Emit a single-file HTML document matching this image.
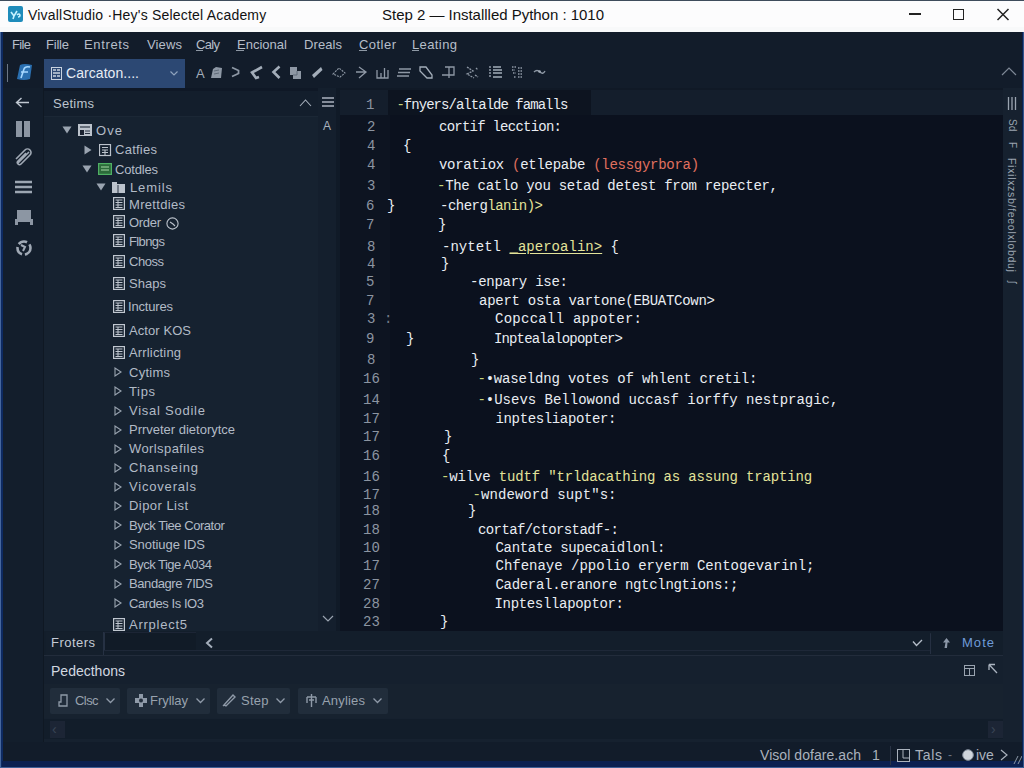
<!DOCTYPE html>
<html><head><meta charset="utf-8">
<style>
*{margin:0;padding:0;box-sizing:border-box}
html,body{width:1024px;height:768px;overflow:hidden;background:#121c2a}
.a{position:absolute;white-space:pre}
.s{font-family:"Liberation Sans",sans-serif}
.m{font-family:"Liberation Mono",monospace}
</style></head><body>
<div class="a" style="left:0px;top:0px;width:1024px;height:32px;background:#fcfcfd;"></div>
<div class="a" style="left:0px;top:27px;width:1024px;height:5px;background:#f8f9fa;"></div>
<div class="a" style="left:0px;top:0px;width:1024px;height:1px;background:#3e4c5c;"></div>
<div class="a" style="left:2px;top:32px;width:1022px;height:25px;background:#121c2a;"></div>
<div class="a" style="left:2px;top:57px;width:1022px;height:31px;background:#121c2a;"></div>
<div class="a" style="left:2px;top:88px;width:41px;height:654px;background:#131e2c;"></div>
<div class="a" style="left:43px;top:88px;width:1px;height:654px;background:#0f1823;"></div>
<div class="a" style="left:44px;top:88px;width:274px;height:543px;background:#162230;"></div>
<div class="a" style="left:44px;top:88px;width:296px;height:3px;background:#0f1826;"></div>
<div class="a" style="left:44px;top:91px;width:274px;height:26px;background:#131e2c;"></div>
<div class="a" style="left:44px;top:116px;width:274px;height:1px;background:#1b2735;"></div>
<div class="a" style="left:318px;top:88px;width:22px;height:543px;background:#141f2d;"></div>
<div class="a" style="left:336px;top:88px;width:4px;height:543px;background:#101a27;"></div>
<div class="a" style="left:340px;top:88px;width:663px;height:543px;background:#0b111e;"></div>
<div class="a" style="left:340px;top:88px;width:663px;height:2px;background:#101926;"></div>
<div class="a" style="left:340px;top:90px;width:48px;height:25px;background:#141e2c;"></div>
<div class="a" style="left:388px;top:90px;width:203px;height:25px;background:#0d1420;"></div>
<div class="a" style="left:591px;top:90px;width:412px;height:25px;background:#141e2c;"></div>
<div class="a" style="left:340px;top:115px;width:50px;height:516px;background:#0d1421;"></div>
<div class="a" style="left:1003px;top:88px;width:21px;height:654px;background:#16212f;"></div>
<div class="a" style="left:44px;top:631px;width:959px;height:111px;background:#16212f;"></div>
<div class="a" style="left:44px;top:631px;width:959px;height:24px;background:#131e2b;"></div>
<div class="a" style="left:46px;top:632px;width:57px;height:23px;background:#141f2c;"></div>
<div class="a" style="left:103px;top:632px;width:1px;height:23px;background:#263143;"></div>
<div class="a" style="left:104px;top:632px;width:92px;height:18px;background:#111b27;border-left:1px solid #263143;border-top:1px solid #1c2535"></div>
<div class="a" style="left:104px;top:650px;width:826px;height:1px;background:#1e2838;"></div>
<div class="a" style="left:930px;top:633px;width:1px;height:21px;background:#222c3b;"></div>
<div class="a" style="left:44px;top:655px;width:959px;height:1px;background:#222c3b;"></div>
<div class="a" style="left:44px;top:656px;width:959px;height:28px;background:#15202e;"></div>
<div class="a" style="left:44px;top:684px;width:959px;height:34px;background:#17222f;"></div>
<div class="a" style="left:44px;top:719px;width:959px;height:20px;background:#121d2a;"></div>
<div class="a" style="left:2px;top:742px;width:1022px;height:24px;background:#121c2a;"></div>
<div class="a" style="left:0px;top:32px;width:1px;height:736px;background:#46669c;"></div>
<div class="a" style="left:1px;top:32px;width:2px;height:736px;background:#0d2a62;"></div>
<div class="a" style="left:2px;top:761px;width:1022px;height:6px;background:#0c2050;"></div>
<div class="a" style="left:0px;top:767px;width:1024px;height:1px;background:#3f5f95;"></div>
<div class="a" style="left:1022px;top:32px;width:1px;height:735px;background:#0a2050;"></div>
<div class="a" style="left:1023px;top:32px;width:1px;height:736px;background:#33558a;"></div>
<div class="a" style="left:44px;top:59px;width:141px;height:29px;background:#2c4873;"></div>
<div class="a" style="left:50px;top:688px;width:70px;height:26px;background:#212d3b;border-radius:2px"></div>
<div class="a" style="left:127px;top:688px;width:83px;height:26px;background:#212d3b;border-radius:2px"></div>
<div class="a" style="left:217px;top:688px;width:73px;height:26px;background:#212d3b;border-radius:2px"></div>
<div class="a" style="left:298px;top:688px;width:90px;height:26px;background:#212d3b;border-radius:2px"></div>
<div class="a" style="left:50px;top:721px;width:15px;height:17px;background:#1c2535;"></div>
<div class="a" style="left:988px;top:721px;width:15px;height:17px;background:#1c2535;"></div>
<div class="a" style="left:8px;top:6px;width:15px;height:16px;background:#1f8cbb;border-radius:2px"></div>
<div class="a" style="left:909px;top:13px;width:12px;height:2px;background:#222;"></div>
<div class="a" style="left:953px;top:9px;width:11px;height:11px;background:transparent;border:1.6px solid #222"></div>
<div class="a" style="left:196px;top:50px;width:7px;height:1px;background:#8e98a4;"></div>
<div class="a" style="left:236px;top:50px;width:8px;height:1px;background:#8e98a4;"></div>
<div class="a" style="left:359px;top:50px;width:8px;height:1px;background:#8e98a4;"></div>
<div class="a" style="left:412px;top:50px;width:7px;height:1px;background:#8e98a4;"></div>
<div class="a" style="left:930px;top:634px;width:1px;height:20px;background:#263042;"></div>
<div class="a" style="left:890px;top:746px;width:1px;height:19px;background:#2a3446;"></div>
<div class="a" style="left:7px;top:64px;width:1px;height:18px;background:#6b7685;"></div>
<svg class="a" style="left:8px;top:6px;" width="15" height="16" viewBox="0 0 15 16"><path d="M3 6L6 10L9 5M6 10L5 13M9 9Q11 7 12 9Q12 11 10 11" fill="none" stroke="#c8f2ff" stroke-width="1.6"/></svg>
<svg class="a" style="left:996px;top:8px;" width="14" height="13" viewBox="0 0 14 13"><path d="M1.5 1L12.5 12M12.5 1L1.5 12" stroke="#222" stroke-width="1.5"/></svg>
<svg class="a" style="left:51px;top:67px;" width="11" height="13" viewBox="0 0 11 13"><rect x="0.5" y="0.5" width="10" height="12" fill="none" stroke="#c9d3e0"/><path d="M2 3H5M6 3H9M2 6H9M2 9H5M6 9H9" stroke="#c9d3e0" stroke-width="1.4"/></svg>
<svg class="a" style="left:170px;top:71px;" width="8" height="5" viewBox="0 0 8 5"><path d="M0.5 0.5L4 4L7.5 0.5" fill="none" stroke="#8fa3bd" stroke-width="1.2"/></svg>
<svg class="a" style="left:62px;top:126px;" width="10" height="8" viewBox="0 0 10 8"><path d="M0.5 0.5H9.5L5 7.5Z" fill="#9aa4b0"/></svg>
<svg class="a" style="left:84px;top:144.5px;" width="8" height="10" viewBox="0 0 8 10"><path d="M0.5 0.5V9.5L7.5 5Z" fill="#9aa4b0"/></svg>
<svg class="a" style="left:82px;top:165px;" width="10" height="8" viewBox="0 0 10 8"><path d="M0.5 0.5H9.5L5 7.5Z" fill="#9aa4b0"/></svg>
<svg class="a" style="left:96px;top:183px;" width="10" height="8" viewBox="0 0 10 8"><path d="M0.5 0.5H9.5L5 7.5Z" fill="#9aa4b0"/></svg>
<svg class="a" style="left:114px;top:367px;" width="8" height="10" viewBox="0 0 8 10"><path d="M1 1V9L7 5Z" fill="none" stroke="#9aa4b0" stroke-width="1.1"/></svg>
<svg class="a" style="left:114px;top:386px;" width="8" height="10" viewBox="0 0 8 10"><path d="M1 1V9L7 5Z" fill="none" stroke="#9aa4b0" stroke-width="1.1"/></svg>
<svg class="a" style="left:114px;top:405.5px;" width="8" height="10" viewBox="0 0 8 10"><path d="M1 1V9L7 5Z" fill="none" stroke="#9aa4b0" stroke-width="1.1"/></svg>
<svg class="a" style="left:114px;top:424.5px;" width="8" height="10" viewBox="0 0 8 10"><path d="M1 1V9L7 5Z" fill="none" stroke="#9aa4b0" stroke-width="1.1"/></svg>
<svg class="a" style="left:114px;top:443.5px;" width="8" height="10" viewBox="0 0 8 10"><path d="M1 1V9L7 5Z" fill="none" stroke="#9aa4b0" stroke-width="1.1"/></svg>
<svg class="a" style="left:114px;top:462.5px;" width="8" height="10" viewBox="0 0 8 10"><path d="M1 1V9L7 5Z" fill="none" stroke="#9aa4b0" stroke-width="1.1"/></svg>
<svg class="a" style="left:114px;top:481.5px;" width="8" height="10" viewBox="0 0 8 10"><path d="M1 1V9L7 5Z" fill="none" stroke="#9aa4b0" stroke-width="1.1"/></svg>
<svg class="a" style="left:114px;top:500.5px;" width="8" height="10" viewBox="0 0 8 10"><path d="M1 1V9L7 5Z" fill="none" stroke="#9aa4b0" stroke-width="1.1"/></svg>
<svg class="a" style="left:114px;top:520px;" width="8" height="10" viewBox="0 0 8 10"><path d="M1 1V9L7 5Z" fill="none" stroke="#9aa4b0" stroke-width="1.1"/></svg>
<svg class="a" style="left:114px;top:539.5px;" width="8" height="10" viewBox="0 0 8 10"><path d="M1 1V9L7 5Z" fill="none" stroke="#9aa4b0" stroke-width="1.1"/></svg>
<svg class="a" style="left:114px;top:559px;" width="8" height="10" viewBox="0 0 8 10"><path d="M1 1V9L7 5Z" fill="none" stroke="#9aa4b0" stroke-width="1.1"/></svg>
<svg class="a" style="left:114px;top:578.5px;" width="8" height="10" viewBox="0 0 8 10"><path d="M1 1V9L7 5Z" fill="none" stroke="#9aa4b0" stroke-width="1.1"/></svg>
<svg class="a" style="left:114px;top:598px;" width="8" height="10" viewBox="0 0 8 10"><path d="M1 1V9L7 5Z" fill="none" stroke="#9aa4b0" stroke-width="1.1"/></svg>
<svg class="a" style="left:77px;top:124px;" width="15" height="13" viewBox="0 0 15 13"><rect x="1" y="0" width="14" height="12" fill="#bcc3cc"/><path d="M3 3H13" stroke="#2a3444" stroke-width="1.2"/><rect x="3" y="6" width="4" height="5" fill="#1a2230"/><path d="M8 7H13M8 9.5H13" stroke="#2a3444" stroke-width="1"/></svg>
<svg class="a" style="left:99px;top:144px;" width="13" height="13" viewBox="0 0 13 13"><rect x="0.5" y="0.5" width="11" height="11" fill="none" stroke="#bcc3cc" stroke-width="1.2"/><path d="M3 3.5H9M3 6H9M3 8.5H9M6 6V11" stroke="#bcc3cc" stroke-width="1.1"/></svg>
<svg class="a" style="left:98px;top:163px;" width="14" height="12" viewBox="0 0 14 12"><rect x="0.6" y="0.6" width="12.8" height="10.8" fill="#2c6a3a" stroke="#4fb064" stroke-width="1.2"/><path d="M3 4H11M3 7H11" stroke="#a8d8a8" stroke-width="1.1"/></svg>
<svg class="a" style="left:112px;top:181px;" width="14" height="13" viewBox="0 0 14 13"><path d="M0 1H5V3H13V12H0Z" fill="#bcc3cc"/><path d="M6 4V12" stroke="#2a3444" stroke-width="1"/></svg>
<svg class="a" style="left:113px;top:197px;" width="12" height="13" viewBox="0 0 12 13"><rect x="0.6" y="0.6" width="10.8" height="11.8" fill="none" stroke="#c0c7d0" stroke-width="1.2"/><path d="M2.5 3H9.5M2.5 5.5H9.5M2.5 8H9.5M2.5 10.5H9.5M5 3V11" stroke="#c0c7d0" stroke-width="1"/></svg>
<svg class="a" style="left:113px;top:215px;" width="12" height="13" viewBox="0 0 12 13"><rect x="0.6" y="0.6" width="10.8" height="11.8" fill="none" stroke="#c0c7d0" stroke-width="1.2"/><path d="M2.5 3H9.5M2.5 5.5H9.5M2.5 8H9.5M2.5 10.5H9.5M5 3V11" stroke="#c0c7d0" stroke-width="1"/></svg>
<svg class="a" style="left:113px;top:234px;" width="12" height="13" viewBox="0 0 12 13"><rect x="0.6" y="0.6" width="10.8" height="11.8" fill="none" stroke="#c0c7d0" stroke-width="1.2"/><path d="M2.5 3H9.5M2.5 5.5H9.5M2.5 8H9.5M2.5 10.5H9.5M5 3V11" stroke="#c0c7d0" stroke-width="1"/></svg>
<svg class="a" style="left:113px;top:255px;" width="12" height="13" viewBox="0 0 12 13"><rect x="0.6" y="0.6" width="10.8" height="11.8" fill="none" stroke="#c0c7d0" stroke-width="1.2"/><path d="M2.5 3H9.5M2.5 5.5H9.5M2.5 8H9.5M2.5 10.5H9.5M5 3V11" stroke="#c0c7d0" stroke-width="1"/></svg>
<svg class="a" style="left:113px;top:277px;" width="12" height="13" viewBox="0 0 12 13"><rect x="0.6" y="0.6" width="10.8" height="11.8" fill="none" stroke="#c0c7d0" stroke-width="1.2"/><path d="M2.5 3H9.5M2.5 5.5H9.5M2.5 8H9.5M2.5 10.5H9.5M5 3V11" stroke="#c0c7d0" stroke-width="1"/></svg>
<svg class="a" style="left:113px;top:300px;" width="12" height="13" viewBox="0 0 12 13"><rect x="0.6" y="0.6" width="10.8" height="11.8" fill="none" stroke="#c0c7d0" stroke-width="1.2"/><path d="M2.5 3H9.5M2.5 5.5H9.5M2.5 8H9.5M2.5 10.5H9.5M5 3V11" stroke="#c0c7d0" stroke-width="1"/></svg>
<svg class="a" style="left:113px;top:324px;" width="12" height="13" viewBox="0 0 12 13"><rect x="0.6" y="0.6" width="10.8" height="11.8" fill="none" stroke="#c0c7d0" stroke-width="1.2"/><path d="M2.5 3H9.5M2.5 5.5H9.5M2.5 8H9.5M2.5 10.5H9.5M5 3V11" stroke="#c0c7d0" stroke-width="1"/></svg>
<svg class="a" style="left:113px;top:346px;" width="12" height="13" viewBox="0 0 12 13"><rect x="0.6" y="0.6" width="10.8" height="11.8" fill="none" stroke="#c0c7d0" stroke-width="1.2"/><path d="M2.5 3H9.5M2.5 5.5H9.5M2.5 8H9.5M2.5 10.5H9.5M5 3V11" stroke="#c0c7d0" stroke-width="1"/></svg>
<svg class="a" style="left:113px;top:618px;" width="12" height="13" viewBox="0 0 12 13"><rect x="0.6" y="0.6" width="10.8" height="11.8" fill="none" stroke="#c0c7d0" stroke-width="1.2"/><path d="M2.5 3H9.5M2.5 5.5H9.5M2.5 8H9.5M2.5 10.5H9.5M5 3V11" stroke="#c0c7d0" stroke-width="1"/></svg>
<svg class="a" style="left:166px;top:217px;" width="13" height="13" viewBox="0 0 13 13"><circle cx="6.5" cy="6.5" r="5.6" fill="none" stroke="#bcc3cc" stroke-width="1.1"/><path d="M4 5L7 7L9 9" stroke="#bcc3cc" fill="none" stroke-width="1.1"/></svg>
<svg class="a" style="left:299px;top:98px;" width="13" height="9" viewBox="0 0 13 9"><path d="M1 8L6.5 2L12 8" fill="none" stroke="#a7b0bc" stroke-width="1.1"/></svg>
<svg class="a" style="left:322px;top:97px;" width="12" height="10" viewBox="0 0 12 10"><path d="M0 1H12M0 5H12M0 9H12" stroke="#aab3bf" stroke-width="1.6"/></svg>
<svg class="a" style="left:322px;top:615px;" width="12" height="8" viewBox="0 0 12 8"><path d="M1 1L6 6L11 1" fill="none" stroke="#9aa4b0" stroke-width="1.2"/></svg>
<svg class="a" style="left:204px;top:637px;" width="10" height="12" viewBox="0 0 10 12"><path d="M8 1.5L3 6L8 10.5" fill="none" stroke="#a4aebb" stroke-width="2"/></svg>
<svg class="a" style="left:105.5px;top:698px;" width="9" height="6" viewBox="0 0 9 6"><path d="M0.5 0.5L4.5 4.5L8.5 0.5" fill="none" stroke="#8f9aa8" stroke-width="1.3"/></svg>
<svg class="a" style="left:195.5px;top:698px;" width="9" height="6" viewBox="0 0 9 6"><path d="M0.5 0.5L4.5 4.5L8.5 0.5" fill="none" stroke="#8f9aa8" stroke-width="1.3"/></svg>
<svg class="a" style="left:276px;top:698px;" width="9" height="6" viewBox="0 0 9 6"><path d="M0.5 0.5L4.5 4.5L8.5 0.5" fill="none" stroke="#8f9aa8" stroke-width="1.3"/></svg>
<svg class="a" style="left:372.7px;top:698px;" width="9" height="6" viewBox="0 0 9 6"><path d="M0.5 0.5L4.5 4.5L8.5 0.5" fill="none" stroke="#8f9aa8" stroke-width="1.3"/></svg>
<svg class="a" style="left:58px;top:694px;" width="10" height="13" viewBox="0 0 10 13"><path d="M3 1H9V12H1V8H3Z" fill="none" stroke="#8f9aa8" stroke-width="1.3"/></svg>
<svg class="a" style="left:134px;top:693px;" width="14" height="15" viewBox="0 0 14 15"><path d="M5 1H9V5H13V10H9V14H5V10H1V5H5Z" fill="#8f9aa8"/><circle cx="7" cy="7.5" r="2" fill="#222d3b"/></svg>
<svg class="a" style="left:222px;top:693px;" width="14" height="14" viewBox="0 0 14 14"><path d="M2 12L11 2L13 4L4 13ZM2 12L1 13" fill="none" stroke="#8f9aa8" stroke-width="1.4"/></svg>
<svg class="a" style="left:305px;top:693px;" width="13" height="15" viewBox="0 0 13 15"><path d="M6.5 1V14M2 4H11M2 4V10M11 4V10M4 7H9" fill="none" stroke="#8f9aa8" stroke-width="1.4"/></svg>
<svg class="a" style="left:912px;top:639px;" width="11" height="8" viewBox="0 0 11 8"><path d="M1 2.5L4.5 6.5L10 1" fill="none" stroke="#b4bdc8" stroke-width="1.4"/></svg>
<svg class="a" style="left:942px;top:637px;" width="9" height="12" viewBox="0 0 9 12"><path d="M4.5 1L1 5.5H3.5L2.5 11H5L5.5 5.5H8Z" fill="#8c98a8"/></svg>
<svg class="a" style="left:964px;top:665px;" width="11" height="11" viewBox="0 0 11 11"><rect x="0.5" y="0.5" width="10" height="10" fill="none" stroke="#9aa4b0"/><path d="M0.5 3.5H10.5M5.5 3.5V10.5" stroke="#9aa4b0"/></svg>
<svg class="a" style="left:987px;top:663px;" width="11" height="11" viewBox="0 0 11 11"><path d="M2 1.5H8M2 1.5V7M2 1.5L10 10" fill="none" stroke="#aab3bf" stroke-width="1.3"/></svg>
<svg class="a" style="left:897px;top:749px;" width="13" height="13" viewBox="0 0 13 13"><rect x="0.5" y="0.5" width="12" height="12" fill="none" stroke="#aab2bd"/><path d="M6 1V9H12" stroke="#aab2bd" fill="none"/></svg>
<svg class="a" style="left:962px;top:749px;" width="12" height="12" viewBox="0 0 12 12"><circle cx="6" cy="6" r="5.3" fill="#cfd5dc" stroke="#8892a0"/></svg>
<svg class="a" style="left:1000px;top:749px;" width="8" height="12" viewBox="0 0 8 12"><path d="M1 1L7 6L1 11" fill="none" stroke="#aab2bd" stroke-width="1.2"/></svg>
<svg class="a" style="left:1013px;top:754px;" width="9" height="11" viewBox="0 0 9 11"><path d="M1 10L5 2M5 10L9 2" stroke="#8a96a6" stroke-width="1"/></svg>
<svg class="a" style="left:15px;top:63px;" width="19" height="19" viewBox="0 0 19 19"><path d="M5 2Q9 0 17 2L15 16Q9 18 2 16Z" fill="#2a6fb0"/><path d="M6 15L9 6Q10 3 15 4M6 9H13" stroke="#a7d8ff" stroke-width="1.6" fill="none"/></svg>
<svg class="a" style="left:15px;top:97px;" width="15" height="12" viewBox="0 0 15 12"><path d="M14 5.5H2M6.5 1L1.5 5.5L6.5 10" fill="none" stroke="#c0c8d2" stroke-width="1.4"/></svg>
<svg class="a" style="left:16px;top:121px;" width="15" height="17" viewBox="0 0 15 17"><rect x="0" y="0" width="6" height="16" fill="#8c96a3"/><rect x="8" y="0" width="6" height="16" fill="#8c96a3"/></svg>
<svg class="a" style="left:15px;top:148px;" width="17" height="18" viewBox="0 0 17 18"><path d="M3 15L14 4M1 11L10 2A3 3 0 0 1 15 7L6 16A2 2 0 0 1 3 13L11 5" fill="none" stroke="#a0a9b5" stroke-width="1.6"/></svg>
<svg class="a" style="left:15px;top:180px;" width="18" height="15" viewBox="0 0 18 15"><path d="M0 2H17M0 7H17M0 12H17" stroke="#9ca6b2" stroke-width="2.4"/></svg>
<svg class="a" style="left:15px;top:209px;" width="18" height="18" viewBox="0 0 18 18"><rect x="2" y="1" width="14" height="9" fill="#8c96a3"/><path d="M0 10H18V16H15V13H3V16H0Z" fill="#8c96a3"/></svg>
<svg class="a" style="left:15px;top:239px;" width="18" height="18" viewBox="0 0 18 18"><circle cx="9" cy="9" r="6.5" fill="none" stroke="#a0a9b5" stroke-width="2.6" stroke-dasharray="9 3"/><path d="M6 6L10 8L8 12" fill="none" stroke="#a0a9b5" stroke-width="2"/></svg>
<svg class="a" style="left:0;top:0" width="1024" height="100" viewBox="0 0 1024 100">
<path d="M211 78L213 69L216 67L222 68L221 78Z" fill="#8e98a5"/><path d="M214 71L219 70M214 74L219 73" stroke="#5f6a78" stroke-width="1"/>
<path d="M232 67.5L238.5 70.5L238.5 73.5L232 76.5" fill="none" stroke="#8e98a5" stroke-width="1.8"/>
<path d="M262 67L252 72.5L256 78L259 77" fill="none" stroke="#a3adb9" stroke-width="2.6"/>
<path d="M279.5 66.5L273.5 72L279.5 78" fill="none" stroke="#a3adb9" stroke-width="2.6"/>
<path d="M290 67H297V71H301V79H293V75H290Z" fill="#8e98a5"/><path d="M297 71V75H293" stroke="#5f6a78" fill="none"/>
<path d="M321 67L312 75L314 78L322.5 70Z" fill="#a3adb9"/>
<path d="M333 74L339 68L345 73L340 77Z" fill="none" stroke="#8e98a5" stroke-width="1.1" stroke-dasharray="2 1"/>
<path d="M359 67L366 72L359 78M356 72H365" fill="none" stroke="#8e98a5" stroke-width="1.3"/>
<path d="M377 70V78H388V70M381 73V78M384.5 68V78" fill="none" stroke="#8e98a5" stroke-width="1.3"/>
<path d="M399 69H411M398 72.5H410M397 76H409" fill="none" stroke="#8e98a5" stroke-width="1.5"/>
<path d="M420 67H426L432 75V78H427L420 71Z" fill="none" stroke="#a3adb9" stroke-width="1.3"/>
<path d="M445 67H454V75H442M449 67V78" fill="none" stroke="#8e98a5" stroke-width="1.3"/>
<path d="M467 67L473 71L467 74L474 78M476 68L478 70M475 75L478 77" fill="none" stroke="#8e98a5" stroke-width="1.3" stroke-dasharray="2 1"/>
<path d="M489 67H491M489 70H491M489 73H491M489 76H491" stroke="#8e98a5" stroke-width="1.5"/><path d="M493 67H501M493 70H502M493 73H502M493 77H502" stroke="#a3adb9" stroke-width="1.3"/>
<path d="M512 67H516M512 70H515M513 73H516M514 77H516M518 68H522M518 71H523M518 74H523M518 77H522" stroke="#8e98a5" stroke-width="1.4" stroke-dasharray="1.5 1"/>
<path d="M534 72Q537 69 540 72T545 71" fill="none" stroke="#8e98a5" stroke-width="1.4"/><circle cx="539.5" cy="71.5" r="1.3" fill="#a3adb9"/>
</svg>
<svg class="a" style="left:1001px;top:66px;" width="16" height="10" viewBox="0 0 16 10"><path d="M1 9L8 2L15 9" fill="none" stroke="#7e8896" stroke-width="1.2"/></svg>
<div id="t27d6acfc" class="a s" style="left:28.0px;top:7.8px;font-size:14px;line-height:14px;color:#121212;letter-spacing:0.201px;">VivallStudio ·Hey's Selectel Academy</div>
<div id="t53f66ff9" class="a s" style="left:382.0px;top:7.3px;font-size:15px;line-height:15px;color:#121212;letter-spacing:-0.020px;">Step 2 — Installled Python : 1010</div>
<div id="t04511f86" class="a s" style="left:12.0px;top:37.8px;font-size:13px;line-height:13px;color:#b6bec9;letter-spacing:-0.649px;">File</div>
<div id="td86eb1df" class="a s" style="left:46.0px;top:37.8px;font-size:13px;line-height:13px;color:#b6bec9;letter-spacing:-0.209px;">Fille</div>
<div id="t122e2e0d" class="a s" style="left:84.0px;top:37.8px;font-size:13px;line-height:13px;color:#b6bec9;letter-spacing:0.636px;">Entrets</div>
<div id="t5f6594cd" class="a s" style="left:147.0px;top:37.8px;font-size:13px;line-height:13px;color:#b6bec9;letter-spacing:0.139px;">Views</div>
<div id="t4c7ac76f" class="a s" style="left:196.0px;top:37.8px;font-size:13px;line-height:13px;color:#b6bec9;letter-spacing:-0.669px;">Caly</div>
<div id="t51c220b1" class="a s" style="left:237.0px;top:37.8px;font-size:13px;line-height:13px;color:#b6bec9;letter-spacing:0.019px;">Encional</div>
<div id="t0d2a9516" class="a s" style="left:304.0px;top:37.8px;font-size:13px;line-height:13px;color:#b6bec9;letter-spacing:0.087px;">Dreals</div>
<div id="t6435b731" class="a s" style="left:359.0px;top:37.8px;font-size:13px;line-height:13px;color:#b6bec9;letter-spacing:0.465px;">Cotler</div>
<div id="t408bfb37" class="a s" style="left:412.0px;top:37.8px;font-size:13px;line-height:13px;color:#b6bec9;letter-spacing:0.392px;">Leating</div>
<div id="td29361e1" class="a s" style="left:66.0px;top:66.3px;font-size:14px;line-height:14px;color:#e6ecf4;letter-spacing:0.058px;">Carcaton....</div>
<div id="t201e9aea" class="a s" style="left:196.0px;top:66.8px;font-size:13px;line-height:13px;color:#a3adb9;">A</div>
<div id="t3d59062c" class="a s" style="left:53.0px;top:97.3px;font-size:13px;line-height:13px;color:#bcc4ce;letter-spacing:0.254px;">Setims</div>
<div id="t05089d22" class="a s" style="left:96.0px;top:123.9px;font-size:13px;line-height:13px;color:#b2bbc6;letter-spacing:1.079px;">Ove</div>
<div id="t79654462" class="a s" style="left:115.0px;top:143.4px;font-size:13px;line-height:13px;color:#b2bbc6;letter-spacing:0.257px;">Catfies</div>
<div id="t27a2d8b7" class="a s" style="left:115.0px;top:162.9px;font-size:13px;line-height:13px;color:#b2bbc6;letter-spacing:-0.180px;">Cotdles</div>
<div id="td7e4e8dd" class="a s" style="left:130.0px;top:180.9px;font-size:13px;line-height:13px;color:#b2bbc6;letter-spacing:0.887px;">Lemils</div>
<div id="tc03c9e98" class="a s" style="left:129.0px;top:197.9px;font-size:13px;line-height:13px;color:#b2bbc6;letter-spacing:0.318px;">Mrettdies</div>
<div id="tf359fc4b" class="a s" style="left:129.0px;top:215.9px;font-size:13px;line-height:13px;color:#b2bbc6;letter-spacing:-0.307px;">Order</div>
<div id="t46e83d39" class="a s" style="left:129.0px;top:234.9px;font-size:13px;line-height:13px;color:#b2bbc6;letter-spacing:-0.604px;">Flbngs</div>
<div id="t15f0a4c3" class="a s" style="left:129.0px;top:255.4px;font-size:13px;line-height:13px;color:#b2bbc6;letter-spacing:-0.462px;">Choss</div>
<div id="ta084c07b" class="a s" style="left:129.0px;top:277.4px;font-size:13px;line-height:13px;color:#b2bbc6;letter-spacing:0.035px;">Shaps</div>
<div id="t5efd9cef" class="a s" style="left:128.0px;top:299.9px;font-size:13px;line-height:13px;color:#b2bbc6;letter-spacing:-0.178px;">Inctures</div>
<div id="tc5f84b61" class="a s" style="left:129.0px;top:323.9px;font-size:13px;line-height:13px;color:#b2bbc6;letter-spacing:0.074px;">Actor KOS</div>
<div id="t06fcb0ee" class="a s" style="left:129.0px;top:345.9px;font-size:13px;line-height:13px;color:#b2bbc6;letter-spacing:0.159px;">Arrlicting</div>
<div id="ta39e5d77" class="a s" style="left:129.0px;top:365.9px;font-size:13px;line-height:13px;color:#b2bbc6;letter-spacing:0.257px;">Cytims</div>
<div id="tfa38ea4c" class="a s" style="left:129.0px;top:384.9px;font-size:13px;line-height:13px;color:#b2bbc6;letter-spacing:0.641px;">Tips</div>
<div id="tebc4430d" class="a s" style="left:129.0px;top:404.4px;font-size:13px;line-height:13px;color:#b2bbc6;letter-spacing:0.755px;">Visal Sodile</div>
<div id="tda6e9498" class="a s" style="left:129.0px;top:423.4px;font-size:13px;line-height:13px;color:#b2bbc6;letter-spacing:-0.011px;">Prrveter dietorytce</div>
<div id="t2b13df32" class="a s" style="left:129.0px;top:442.4px;font-size:13px;line-height:13px;color:#b2bbc6;letter-spacing:0.404px;">Worlspafiles</div>
<div id="t20ed5ef8" class="a s" style="left:129.0px;top:461.4px;font-size:13px;line-height:13px;color:#b2bbc6;letter-spacing:0.855px;">Chanseing</div>
<div id="t8be7b756" class="a s" style="left:129.0px;top:480.4px;font-size:13px;line-height:13px;color:#b2bbc6;letter-spacing:0.808px;">Vicoverals</div>
<div id="tc86975e3" class="a s" style="left:129.0px;top:499.4px;font-size:13px;line-height:13px;color:#b2bbc6;letter-spacing:0.455px;">Dipor List</div>
<div id="td7ab4f56" class="a s" style="left:129.0px;top:518.9px;font-size:13px;line-height:13px;color:#b2bbc6;letter-spacing:-0.472px;">Byck Tiee Corator</div>
<div id="tde9a01a2" class="a s" style="left:129.0px;top:538.4px;font-size:13px;line-height:13px;color:#b2bbc6;letter-spacing:-0.055px;">Snotiuge IDS</div>
<div id="t93092b44" class="a s" style="left:129.0px;top:557.9px;font-size:13px;line-height:13px;color:#b2bbc6;letter-spacing:-0.505px;">Byck Tige A034</div>
<div id="te9a6e1de" class="a s" style="left:129.0px;top:577.4px;font-size:13px;line-height:13px;color:#b2bbc6;letter-spacing:-0.408px;">Bandagre 7IDS</div>
<div id="t590b450a" class="a s" style="left:129.0px;top:596.9px;font-size:13px;line-height:13px;color:#b2bbc6;letter-spacing:-0.433px;">Cardes Is IO3</div>
<div id="t3ee0886e" class="a s" style="left:129.0px;top:618.4px;font-size:13px;line-height:13px;color:#b2bbc6;letter-spacing:0.748px;">Arrplect5</div>
<div id="t56d26ecb" class="a s" style="left:323.0px;top:119.8px;font-size:12px;line-height:12px;color:#aab3bf;">A</div>
<div id="t26934631" class="a m" style="left:366.0px;top:98.1px;font-size:14px;line-height:14px;color:#8c95a1;">1</div>
<div id="tbbc6d082" class="a m" style="left:367.0px;top:120.4px;font-size:14px;line-height:14px;color:#8c95a1;">2</div>
<div id="t013d7854" class="a m" style="left:367.0px;top:139.4px;font-size:14px;line-height:14px;color:#8c95a1;">4</div>
<div id="ta127c0c4" class="a m" style="left:367.0px;top:158.1px;font-size:14px;line-height:14px;color:#8c95a1;">4</div>
<div id="t4809c22e" class="a m" style="left:367.0px;top:178.9px;font-size:14px;line-height:14px;color:#8c95a1;">3</div>
<div id="t96f2c749" class="a m" style="left:366.0px;top:198.7px;font-size:14px;line-height:14px;color:#8c95a1;">6</div>
<div id="tc946f127" class="a m" style="left:366.0px;top:218.4px;font-size:14px;line-height:14px;color:#8c95a1;">7</div>
<div id="t925ac841" class="a m" style="left:367.0px;top:240.0px;font-size:14px;line-height:14px;color:#8c95a1;">8</div>
<div id="tf227bfb8" class="a m" style="left:367.0px;top:257.4px;font-size:14px;line-height:14px;color:#8c95a1;">4</div>
<div id="tb4e200cb" class="a m" style="left:366.0px;top:275.2px;font-size:14px;line-height:14px;color:#8c95a1;">5</div>
<div id="t634b48e1" class="a m" style="left:366.0px;top:294.4px;font-size:14px;line-height:14px;color:#8c95a1;">7</div>
<div id="t49d37341" class="a m" style="left:367.0px;top:312.4px;font-size:14px;line-height:14px;color:#8c95a1;">3</div>
<div id="ta2e36ef7" class="a m" style="left:366.0px;top:331.8px;font-size:14px;line-height:14px;color:#8c95a1;">9</div>
<div id="tc63abbbc" class="a m" style="left:367.0px;top:353.1px;font-size:14px;line-height:14px;color:#8c95a1;">8</div>
<div id="t4b38f3b7" class="a m" style="left:363.0px;top:372.4px;font-size:14px;line-height:14px;color:#8c95a1;">16</div>
<div id="tf7632d24" class="a m" style="left:363.0px;top:393.1px;font-size:14px;line-height:14px;color:#8c95a1;">14</div>
<div id="te790cc37" class="a m" style="left:363.0px;top:412.4px;font-size:14px;line-height:14px;color:#8c95a1;">17</div>
<div id="t89e23e10" class="a m" style="left:363.0px;top:430.2px;font-size:14px;line-height:14px;color:#8c95a1;">17</div>
<div id="td0698183" class="a m" style="left:363.0px;top:449.3px;font-size:14px;line-height:14px;color:#8c95a1;">16</div>
<div id="t1e73f086" class="a m" style="left:363.0px;top:470.0px;font-size:14px;line-height:14px;color:#8c95a1;">16</div>
<div id="t55c0ac96" class="a m" style="left:363.0px;top:487.6px;font-size:14px;line-height:14px;color:#8c95a1;">17</div>
<div id="t7945c90d" class="a m" style="left:363.0px;top:504.2px;font-size:14px;line-height:14px;color:#8c95a1;">18</div>
<div id="tc4716148" class="a m" style="left:363.0px;top:522.8px;font-size:14px;line-height:14px;color:#8c95a1;">18</div>
<div id="t0fc4c625" class="a m" style="left:363.0px;top:541.4px;font-size:14px;line-height:14px;color:#8c95a1;">10</div>
<div id="t048415db" class="a m" style="left:363.0px;top:559.4px;font-size:14px;line-height:14px;color:#8c95a1;">17</div>
<div id="te45ed20f" class="a m" style="left:363.0px;top:577.9px;font-size:14px;line-height:14px;color:#8c95a1;">27</div>
<div id="t3dd4b45d" class="a m" style="left:363.0px;top:597.0px;font-size:14px;line-height:14px;color:#8c95a1;">28</div>
<div id="te83c9abc" class="a m" style="left:363.0px;top:615.4px;font-size:14px;line-height:14px;color:#8c95a1;">23</div>
<div id="t3c0ff16e" class="a s" style="left:51.0px;top:636.3px;font-size:13px;line-height:13px;color:#c4cbd5;letter-spacing:0.472px;">Froters</div>
<div id="t22e0e352" class="a s" style="left:51.0px;top:663.8px;font-size:14px;line-height:14px;color:#d2d8e0;letter-spacing:0.006px;">Pedecthons</div>
<div id="te09646f9" class="a s" style="left:75.0px;top:694.3px;font-size:13px;line-height:13px;color:#98a2ae;letter-spacing:-0.559px;">Clsc</div>
<div id="t9e19745f" class="a s" style="left:150.0px;top:694.3px;font-size:13px;line-height:13px;color:#98a2ae;letter-spacing:-0.046px;">Fryllay</div>
<div id="tc5575240" class="a s" style="left:241.0px;top:694.3px;font-size:13px;line-height:13px;color:#98a2ae;letter-spacing:0.252px;">Step</div>
<div id="tcd1e5f0a" class="a s" style="left:322.0px;top:694.3px;font-size:13px;line-height:13px;color:#98a2ae;letter-spacing:0.182px;">Anylies</div>
<div id="t13248dfa" class="a s" style="left:52.0px;top:721.8px;font-size:14px;line-height:14px;color:#3a4556;">‹</div>
<div id="tf522a10c" class="a s" style="left:991.0px;top:721.8px;font-size:14px;line-height:14px;color:#3a4556;">›</div>
<div id="tb3e37006" class="a s" style="left:962.0px;top:636.3px;font-size:13px;line-height:13px;color:#6e9bd8;letter-spacing:1.033px;">Mote</div>
<div id="t6f007083" class="a s" style="left:760.0px;top:747.8px;font-size:14px;line-height:14px;color:#aab2bd;letter-spacing:0.057px;">Visol dofare.ach</div>
<div id="t03e51e05" class="a s" style="left:872.0px;top:747.8px;font-size:14px;line-height:14px;color:#aab2bd;">1</div>
<div id="t1fee2e21" class="a s" style="left:915.0px;top:747.8px;font-size:14px;line-height:14px;color:#aab2bd;letter-spacing:0.701px;">Tals</div>
<div id="t84644f20" class="a s" style="left:948.0px;top:748.8px;font-size:12px;line-height:12px;color:#6a7482;">-</div>
<div id="teb28b963" class="a s" style="left:976.0px;top:747.8px;font-size:14px;line-height:14px;color:#aab2bd;">ive</div>
<div id="c554e05fb" class="a m" style="left:396.4px;top:98.1px;font-size:14px;line-height:14px;letter-spacing:-0.965px;"><span style="color:#c8d47a;">-</span><span style="color:#e9edf2;">fnyers/altalde famalls</span></div>
<div id="c84eefe1a" class="a m" style="left:439.0px;top:120.4px;font-size:14px;line-height:14px;letter-spacing:-0.761px;"><span style="color:#e9edf2;">cortif lecction:</span></div>
<div id="c375bf79b" class="a m" style="left:403.0px;top:139.4px;font-size:14px;line-height:14px;"><span style="color:#e9edf2;">{</span></div>
<div id="cf0e3438c" class="a m" style="left:439.0px;top:158.1px;font-size:14px;line-height:14px;letter-spacing:-0.285px;"><span style="color:#e9edf2;">voratiox </span><span style="color:#e0705e;">(</span><span style="color:#e9edf2;">etlepabe </span><span style="color:#e0705e;">(lessgyrbora)</span></div>
<div id="ce8ebc676" class="a m" style="left:437.0px;top:178.9px;font-size:14px;line-height:14px;letter-spacing:-0.289px;"><span style="color:#c8d47a;">-</span><span style="color:#e9edf2;">The catlo you setad detest from repecter,</span></div>
<div id="c35b4e5bf" class="a m" style="left:387.0px;top:198.7px;font-size:14px;line-height:14px;"><span style="color:#e9edf2;">}</span></div>
<div id="cbeeace73" class="a m" style="left:440.0px;top:198.7px;font-size:14px;line-height:14px;letter-spacing:-0.518px;"><span style="color:#e9edf2;">-cherg</span><span style="color:#e3e39a;">lanin)&gt;</span></div>
<div id="c73deb485" class="a m" style="left:438.0px;top:218.4px;font-size:14px;line-height:14px;"><span style="color:#e9edf2;">}</span></div>
<div id="c1bb28330" class="a m" style="left:442.0px;top:240.0px;font-size:14px;line-height:14px;letter-spacing:0.029px;"><span style="color:#e9edf2;">-nytetl </span><span style="color:#e3e39a;text-decoration:underline;text-underline-offset:2px">_aperoalin&gt;</span><span style="color:#e9edf2;"> {</span></div>
<div id="c6be68dd3" class="a m" style="left:441.0px;top:257.4px;font-size:14px;line-height:14px;"><span style="color:#e9edf2;">}</span></div>
<div id="cdc0b48f1" class="a m" style="left:470.0px;top:275.2px;font-size:14px;line-height:14px;letter-spacing:-0.256px;"><span style="color:#e9edf2;">-enpary ise:</span></div>
<div id="cb0ffa1c3" class="a m" style="left:479.0px;top:294.4px;font-size:14px;line-height:14px;letter-spacing:-0.273px;"><span style="color:#e9edf2;">apert osta vartone(EBUATCown&gt;</span></div>
<div id="c79f83362" class="a m" style="left:384.0px;top:312.4px;font-size:14px;line-height:14px;"><span style="color:#737b88;">:</span></div>
<div id="ca31f8484" class="a m" style="left:495.0px;top:312.4px;font-size:14px;line-height:14px;letter-spacing:0.261px;"><span style="color:#e9edf2;">Copccall appoter:</span></div>
<div id="c6b25fe46" class="a m" style="left:406.0px;top:331.8px;font-size:14px;line-height:14px;"><span style="color:#e9edf2;">}</span></div>
<div id="c65f0a91d" class="a m" style="left:494.0px;top:331.8px;font-size:14px;line-height:14px;letter-spacing:-0.864px;"><span style="color:#e9edf2;">Inptealalopopter&gt;</span></div>
<div id="c3b6d5ac8" class="a m" style="left:471.0px;top:353.1px;font-size:14px;line-height:14px;"><span style="color:#e9edf2;">}</span></div>
<div id="c9d967981" class="a m" style="left:477.4px;top:372.4px;font-size:14px;line-height:14px;letter-spacing:-0.171px;"><span style="color:#c8d47a;">-</span><span style="color:#e9edf2;">•</span><span style="color:#e9edf2;">waseldng votes of whlent cretil:</span></div>
<div id="c2ae27871" class="a m" style="left:477.4px;top:393.1px;font-size:14px;line-height:14px;letter-spacing:-0.006px;"><span style="color:#c8d47a;">-</span><span style="color:#e9edf2;">•</span><span style="color:#e9edf2;">Usevs Bellowond uccasf iorffy nestpragic,</span></div>
<div id="ccda965ee" class="a m" style="left:495.5px;top:412.4px;font-size:14px;line-height:14px;letter-spacing:-0.359px;"><span style="color:#e9edf2;">inptesliapoter:</span></div>
<div id="c91795aad" class="a m" style="left:444.0px;top:430.2px;font-size:14px;line-height:14px;"><span style="color:#e9edf2;">}</span></div>
<div id="c24900bf4" class="a m" style="left:442.0px;top:449.3px;font-size:14px;line-height:14px;"><span style="color:#e9edf2;">{</span></div>
<div id="c73436c5d" class="a m" style="left:441.0px;top:470.0px;font-size:14px;line-height:14px;letter-spacing:-0.160px;"><span style="color:#c8d47a;">-</span><span style="color:#e9edf2;">wilve </span><span style="color:#e3e39a;">tudtf "trldacathing as assung trapting</span></div>
<div id="c9ce2ff2c" class="a m" style="left:472.5px;top:487.6px;font-size:14px;line-height:14px;letter-spacing:0.074px;"><span style="color:#c8d47a;">-</span><span style="color:#e9edf2;">wndeword supt"s:</span></div>
<div id="cfc2cad82" class="a m" style="left:468.0px;top:504.2px;font-size:14px;line-height:14px;"><span style="color:#e9edf2;">}</span></div>
<div id="cf1138474" class="a m" style="left:478.0px;top:522.8px;font-size:14px;line-height:14px;letter-spacing:-0.601px;"><span style="color:#e9edf2;">cortaf/ctorstadf-:</span></div>
<div id="c155839d3" class="a m" style="left:495.5px;top:541.4px;font-size:14px;line-height:14px;letter-spacing:-0.321px;"><span style="color:#e9edf2;">Cantate supecaidlonl:</span></div>
<div id="c0f9c59b0" class="a m" style="left:495.5px;top:559.4px;font-size:14px;line-height:14px;letter-spacing:-0.007px;"><span style="color:#e9edf2;">Chfenaye /ppolio eryerm Centogevarinl;</span></div>
<div id="c8fe0b3f6" class="a m" style="left:495.5px;top:577.9px;font-size:14px;line-height:14px;letter-spacing:-0.312px;"><span style="color:#e9edf2;">Caderal.eranore ngtclngtions:;</span></div>
<div id="c8ded2941" class="a m" style="left:494.5px;top:597.0px;font-size:14px;line-height:14px;letter-spacing:-0.328px;"><span style="color:#e9edf2;">Inptesllapoptor:</span></div>
<div id="c8943ee4f" class="a m" style="left:440.0px;top:615.4px;font-size:14px;line-height:14px;"><span style="color:#e9edf2;">}</span></div>
<svg class="a" style="left:1007px;top:97px" width="10" height="13"><path d="M1.5 0V13M5 0V13M8.5 0V13" stroke="#9aa4b0" stroke-width="1.3"/></svg>
<div class="a s" style="left:1006px;top:119px;color:#9aa4b0;font-size:10px;line-height:12px;writing-mode:vertical-rl">Sd</div>
<div class="a s" style="left:1006px;top:142px;color:#9aa4b0;font-size:10px;line-height:12px;writing-mode:vertical-rl">F</div>
<div class="a s" style="left:1006px;top:158px;color:#9aa4b0;font-size:10.5px;line-height:12px;letter-spacing:0.7px;writing-mode:vertical-rl">Fixilxzsb/feeolxlobduj</div>
<div class="a s" style="left:1006px;top:281px;color:#9aa4b0;font-size:10px;line-height:12px;writing-mode:vertical-rl">ʃ</div>
</body></html>
